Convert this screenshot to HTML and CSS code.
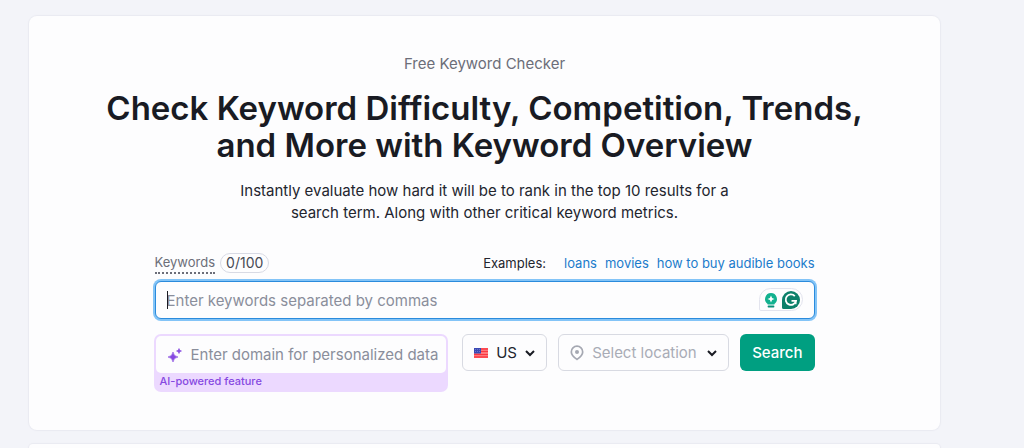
FILE: index.html
```html
<!DOCTYPE html>
<html lang="en">

<head>
    <meta charset="UTF-8">
    <meta name="viewport" content="width=device-width, initial-scale=1.0">
    <title>Free Keyword Checker</title>
    <link rel="stylesheet" href="styles.css">
</head>

<body>
    <main class="card">
        <p class="eyebrow">Free Keyword Checker</p>
        <h1 class="title">Check Keyword Difficulty, Competition, Trends,<br>and More with Keyword Overview</h1>
        <p class="lead">Instantly evaluate how hard it will be to rank in the top 10 results for a<br>search term. Along with other critical keyword metrics.</p>

        <form class="form">
            <div class="form-head">
                <label class="keywords-label" for="keywords">Keywords</label>
                <span class="counter">0/100</span>
                <div class="examples">
                    <span class="examples-title">Examples:</span>
                    <a href="#">loans</a>
                    <a href="#">movies</a>
                    <a href="#">how to buy audible books</a>
                </div>
            </div>

            <div class="keywords-field">
                <input class="keywords-input" id="keywords" type="text" placeholder="Enter keywords separated by commas">
                <span class="caret"></span>
                <span class="helper">
                    <svg width="14" height="16" viewBox="0 0 14 16">
                        <path d="M7 1a6 6 0 0 0-3.400 10.900V12.500h6.800v-.6A6 6 0 0 0 7 1z" fill="#12b18f" />
                        <path d="M7 3.500l1.100 2.400L10.500 7 8.100 8.100 7 10.500 5.900 8.100 3.500 7l2.400-1.100z" fill="#fff" />
                        <path d="M4.500 14.500h5" stroke="#0a8f78" stroke-width="1.800" stroke-linecap="round" />
                    </svg>
                    <svg width="18" height="18" viewBox="0 0 18 18">
                        <path d="M9 0a9 9 0 1 1 0 18H1.500Q0 18 0 16.500V9a9 9 0 0 1 9-9z" fill="#0b806a" />
                        <path d="M12.800 5.200A5.200 5.200 0 1 0 14 9.800H9.500" fill="none" stroke="#fff" stroke-width="1.800" />
                        <path d="M13.800 9.200v4" fill="none" stroke="#fff" stroke-width="1.400" />
                    </svg>
                </span>
            </div>

            <div class="form-row">
                <div class="domain">
                    <div class="domain-field">
                        <svg width="16" height="16" viewBox="0 0 16 16" fill="#8649e1">
                            <path d="M6 5Q6.600 9.400 11 10 6.600 10.600 6 15 5.400 10.600 1 10 5.400 9.400 6 5z" stroke="#8649e1" stroke-width=".6" />
                            <path d="M12 1.500Q12.300 3.700 14.500 4 12.300 4.300 12 6.500 11.700 4.300 9.500 4 11.700 3.700 12 1.500z" stroke="#8649e1" stroke-width=".6" />
                        </svg>
                        <input class="domain-input" id="domain" type="text" placeholder="Enter domain for personalized data">
                    </div>
                    <label class="domain-note" for="domain">AI-powered feature</label>
                </div>

                <div class="picker country">
                    <svg class="picker-icon" width="14" height="10" viewBox="0 0 14 10">
                        <path d="M0 0h14v10H0z" fill="#ff8f8f" />
                        <path d="M0 1h14M0 3.500h14M0 6.500h14M0 9h14" stroke="#fb3640" stroke-width="1.500" />
                        <path d="M0 0h7v5.500H0z" fill="#3a49b4" />
                        <path d="M1 1.500h5M1 3.500h5" stroke="#8b93d8" stroke-width=".6" stroke-dasharray="1 1" />
                    </svg>
                    <select class="picker-select" aria-label="Country">
                        <option>US</option>
                    </select>
                    <svg class="picker-arrow" width="12" height="8" viewBox="0 0 12 8">
                        <path d="M2 2l4 4 4-4" />
                    </svg>
                </div>

                <div class="picker location">
                    <svg class="picker-icon" width="14" height="16" viewBox="0 0 14 16">
                        <path d="M7 1.200a5.700 5.700 0 0 1 5.700 5.700c0 3-3 5.600-5.700 7.500-2.700-1.900-5.700-4.500-5.700-7.500A5.700 5.700 0 0 1 7 1.200z" fill="none" stroke="#a5a8b2" stroke-width="1.700" />
                        <circle cx="7" cy="7" r="2" fill="#a5a8b2" />
                    </svg>
                    <select class="picker-select" aria-label="Location">
                        <option>Select location</option>
                    </select>
                    <svg class="picker-arrow" width="12" height="8" viewBox="0 0 12 8">
                        <path d="M2 2l4 4 4-4" />
                    </svg>
                </div>

                <button class="search" type="submit">Search</button>
            </div>
        </form>
    </main>

    <section class="card-next"></section>
</body>

</html>
```

FILE: styles.css
```css
* {
    box-sizing: border-box;
}

body {
    display: flex;
    flex-direction: column;
    gap: 14px;
    min-height: 100vh;
    margin: 0;
    padding: 16px 84px 0 29px;
    background: #f3f4f9;
    color: #23252e;
    font-family: Inter, "Liberation Sans", sans-serif;
    font-size: 15px;
}

input,
select,
button {
    font: inherit;
}

.card,
.card-next {
    background: #fdfdfe;
    box-shadow: 0 0 1px 1px #e9eaf1;
}

.card {
    padding: 38px 24px;
    border-radius: 8px;
    text-align: center;
}

.card-next {
    flex: 1;
    border-radius: 8px 8px 0 0;
}

.eyebrow {
    margin: 0;
    line-height: 20px;
    color: #6c6e79;
}

.title {
    margin: 16px 0;
    color: #191b23;
    font-size: 33px;
    font-weight: 600;
    line-height: 37px;
}

.lead {
    margin: 0;
    line-height: 22px;
}

.form {
    max-width: 660px;
    margin: 28px auto 0;
    text-align: left;
}

.form-head {
    display: flex;
    align-items: center;
    gap: 5px;
    margin-bottom: 7px;
    font-size: 13px;
    line-height: 20px;
}

.keywords-label {
    border-bottom: 2px dotted #6c6e79;
    color: #6c6e79;
}

.counter {
    padding: 0 5px;
    border: 1px solid #d8dae4;
    border-radius: 10px;
    font-size: 14px;
    line-height: 18px;
    color: #484a54;
}

.examples {
    display: flex;
    gap: 8px;
    margin-left: auto;
}

.examples-title {
    margin-right: 10px;
}

.examples a {
    color: #1b7bcb;
    text-decoration: none;
}

.keywords-field {
    position: relative;
}

.keywords-input {
    display: block;
    width: 100%;
    height: 38px;
    padding: 0 64px 0 11px;
    border: 1px solid #2b8bdc;
    border-radius: 6px;
    outline: none;
    background: #fdfdfe;
    box-shadow: 0 0 0 2px #83c4f7;
}

.keywords-input::placeholder,
.domain-input::placeholder {
    color: #8a8e9b;
    opacity: 1;
}

.caret {
    position: absolute;
    top: 10px;
    left: 12px;
    width: 1px;
    height: 18px;
    background: #191b23;
}

.helper {
    position: absolute;
    top: 7px;
    right: 12px;
    display: flex;
    align-items: center;
    gap: 4px;
    height: 23px;
    padding: 0 2px 0 4px;
    border: 1px solid #e3e4ee;
    border-radius: 12px 12px 12px 2px;
}

.form-row {
    display: flex;
    align-items: flex-start;
    gap: 11px;
    margin-top: 15px;
}

.domain {
    flex: 1;
    margin: 0 3px 0 -1px;
    padding: 2px;
    border-radius: 7px;
    background: #ecd9ff;
}

.domain-field {
    display: flex;
    align-items: center;
    gap: 8px;
    height: 37px;
    padding: 0 4px 0 11px;
    border-radius: 5px;
    background: #fdfdfe;
}

.domain-field svg {
    flex: none;
}

.domain-input {
    flex: 1;
    min-width: 0;
    padding: 0;
    border: none;
    outline: none;
    background: none;
}

.domain-note {
    display: block;
    padding: 0 4px;
    font-size: 11px;
    font-weight: 500;
    line-height: 17px;
    color: #8649e1;
}

.picker {
    position: relative;
}

.country {
    width: 85px;
}

.location {
    width: 171px;
}

.picker-select {
    display: block;
    width: 100%;
    height: 37px;
    padding: 0 24px 0 33px;
    border: 1px solid #d8dae2;
    border-radius: 6px;
    appearance: none;
    background: #fdfdfe;
    color: #23252e;
}

.location .picker-select {
    color: #a9acb6;
}

.picker-icon,
.picker-arrow {
    position: absolute;
    top: 0;
    bottom: 0;
    margin: auto 0;
    pointer-events: none;
}

.picker-icon {
    left: 12px;
}

.picker-arrow {
    right: 11px;
    fill: none;
    stroke: #191b23;
    stroke-width: 2;
}

.search {
    height: 37px;
    padding: 0 12px;
    border: none;
    border-radius: 6px;
    background: #009f81;
    color: #fff;
    font-weight: 500;
}
```
